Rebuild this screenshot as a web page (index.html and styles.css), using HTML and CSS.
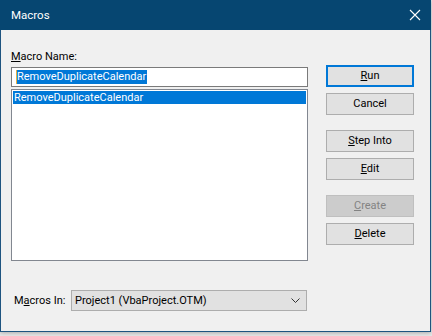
FILE: index.html
```html
<!doctype html>
<html lang="en">
<head>
    <meta charset="UTF-8">
    <title>Macros</title>
    <link rel="stylesheet" href="styles.css">
</head>
<body>

    <div class="window">
        <div class="titlebar">
            <span class="title">Macros</span>
            <svg class="close" width="12" height="12" viewBox="0 0 12 12">
                <path d="M1 1 L11 11 M11 1 L1 11" stroke="#fff" stroke-width="1.1" fill="none"/>
            </svg>
        </div>

        <div class="content">
            <div class="left">
                <div class="label"><u>M</u>acro Name:</div>
                <div class="input"><span class="sel">RemoveDuplicateCalendar</span></div>
                <ul class="list">
                    <li class="active">RemoveDuplicateCalendar</li>
                </ul>
                <div class="macros-in">
                    <span class="in-label">M<u>a</u>cros In:</span>
                    <div class="select">
                        <span>Project1 (VbaProject.OTM)</span>
                        <svg width="9" height="5" viewBox="0 0 9 5">
                            <path d="M0.5 0.5 L4.5 4.5 L8.5 0.5" stroke="#333" stroke-width="1" fill="none"/>
                        </svg>
                    </div>
                </div>
            </div>

            <div class="right">
                <a href="javascript:void(0)" class="btn default"><u>R</u>un</a>
                <a href="javascript:void(0)" class="btn">Cancel</a>
                <a href="javascript:void(0)" class="btn group"><u>S</u>tep Into</a>
                <a href="javascript:void(0)" class="btn"><u>E</u>dit</a>
                <a href="javascript:void(0)" class="btn group disabled"><u>C</u>reate</a>
                <a href="javascript:void(0)" class="btn"><u>D</u>elete</a>
            </div>
        </div>
    </div>

</body>
</html>
```

FILE: styles.css
```css
*{
    padding: 0;
    margin: 0;
    box-sizing: border-box;
}
body{
    width: 432px;
    height: 336px;
    background-color: #e6e6e6;
    font-family: Roboto, "Liberation Sans", Arial, sans-serif;
    font-size: 11px;
    color: #000;
    overflow: hidden;
}
ul,li{
    list-style: none;
}
u{
    text-decoration: underline;
    text-underline-offset: 1px;
}
.window{
    width: 431px;
    height: 332px;
    background-color: #f0f0f0;
    border: 1px solid #1e5480;
    border-top: none;
    box-shadow: 0 1px 4px rgba(0,0,0,0.25);
}
.titlebar{
    height: 30px;
    margin: 0 -1px;
    background-color: #064671;
    display: flex;
    align-items: center;
    justify-content: space-between;
    padding: 0 10px 0 11px;
}
.title{
    color: #fff;
    font-size: 11.5px;
}
.close{
    margin-top: -1px;
}

.content{
    display: flex;
    padding-left: 10px;
}
.left{
    width: 297px;
}
.label{
    margin-top: 19px;
    height: 15px;
    line-height: 15px;
    margin-bottom: 3px;
}
.input{
    height: 20px;
    background-color: #fff;
    border: 1px solid #7a7a7a;
    padding: 2px 0 0 4px;
    line-height: 14px;
}
.input .sel{
    display: inline-block;
    background-color: #0078d7;
    color: #fff;
    padding-right: 1px;
    border-left: 1px solid #e8b040;
}
.list{
    margin-top: 2px;
    height: 172px;
    background-color: #fff;
    border: 1px solid #828790;
    padding: 1px;
}
.list li{
    height: 13px;
    line-height: 13px;
    padding-left: 1px;
}
.list li.active{
    background-color: #0078d7;
    color: #fff;
}

.macros-in{
    margin-top: 29px;
    display: flex;
    align-items: center;
    padding-left: 3px;
}
.in-label{
    width: 57px;
}
.select{
    width: 236px;
    height: 21px;
    background-color: #e1e1e1;
    border: 1px solid #adadad;
    display: flex;
    align-items: center;
    justify-content: space-between;
    padding: 0 6px 0 3px;
}

.right{
    margin-left: 18px;
    padding-top: 35px;
    display: flex;
    flex-direction: column;
}
.btn{
    display: block;
    width: 88px;
    height: 22px;
    line-height: 20px;
    margin-bottom: 6px;
    text-align: center;
    text-decoration: none;
    color: #000;
    background-color: #e1e1e1;
    border: 1px solid #adadad;
}
.btn.group{
    margin-top: 9px;
}
.btn.default{
    border: 2px solid #0078d7;
    line-height: 18px;
}
.btn.disabled{
    background-color: #cccccc;
    border-color: #bfbfbf;
    color: #838383;
}
```
